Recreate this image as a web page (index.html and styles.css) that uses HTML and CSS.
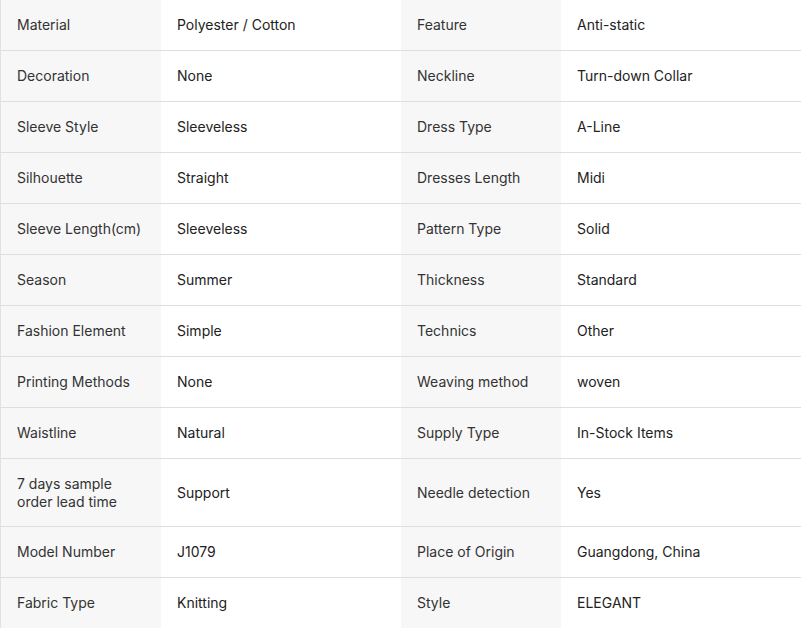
FILE: index.html
```html
<!DOCTYPE html>
<html>
<head>
<meta charset="utf-8">
<link rel="stylesheet" href="styles.css">
</head>
<body>
<div class="attrs">
<div class="lbl">Material</div><div class="val">Polyester / Cotton</div><div class="lbl">Feature</div><div class="val">Anti-static</div>
<div class="lbl">Decoration</div><div class="val">None</div><div class="lbl">Neckline</div><div class="val">Turn-down Collar</div>
<div class="lbl">Sleeve Style</div><div class="val">Sleeveless</div><div class="lbl">Dress Type</div><div class="val">A-Line</div>
<div class="lbl">Silhouette</div><div class="val">Straight</div><div class="lbl">Dresses Length</div><div class="val">Midi</div>
<div class="lbl">Sleeve Length(cm)</div><div class="val">Sleeveless</div><div class="lbl">Pattern Type</div><div class="val">Solid</div>
<div class="lbl">Season</div><div class="val">Summer</div><div class="lbl">Thickness</div><div class="val">Standard</div>
<div class="lbl">Fashion Element</div><div class="val">Simple</div><div class="lbl">Technics</div><div class="val">Other</div>
<div class="lbl">Printing Methods</div><div class="val">None</div><div class="lbl">Weaving method</div><div class="val">woven</div>
<div class="lbl">Waistline</div><div class="val">Natural</div><div class="lbl">Supply Type</div><div class="val">In-Stock Items</div>
<div class="lbl">7 days sample order lead time</div><div class="val">Support</div><div class="lbl">Needle detection</div><div class="val">Yes</div>
<div class="lbl">Model Number</div><div class="val">J1079</div><div class="lbl">Place of Origin</div><div class="val">Guangdong, China</div>
<div class="lbl">Fabric Type</div><div class="val">Knitting</div><div class="lbl">Style</div><div class="val">ELEGANT</div>
</div>
</body>
</html>
```
FILE: styles.css
```css
html, body {
  margin: 0;
  padding: 0;
  background: #ffffff;
}
.attrs {
  display: grid;
  grid-template-columns: 160px 240px 160px 240px;
  width: 800px;
  border-left: 1px solid #e2e2e2;
  font-family: Inter, "Noto Sans", sans-serif;
  font-size: 14px;
  line-height: 18px;
}
.lbl, .val {
  box-sizing: border-box;
  min-height: 51px;
  padding: 15.5px 16px;
  border-bottom: 1px solid #dedede;
  display: flex;
  align-items: center;
}
.lbl {
  background: #f7f7f7;
  color: #333333;
}
.val {
  background: #ffffff;
  color: #222222;
}
```
